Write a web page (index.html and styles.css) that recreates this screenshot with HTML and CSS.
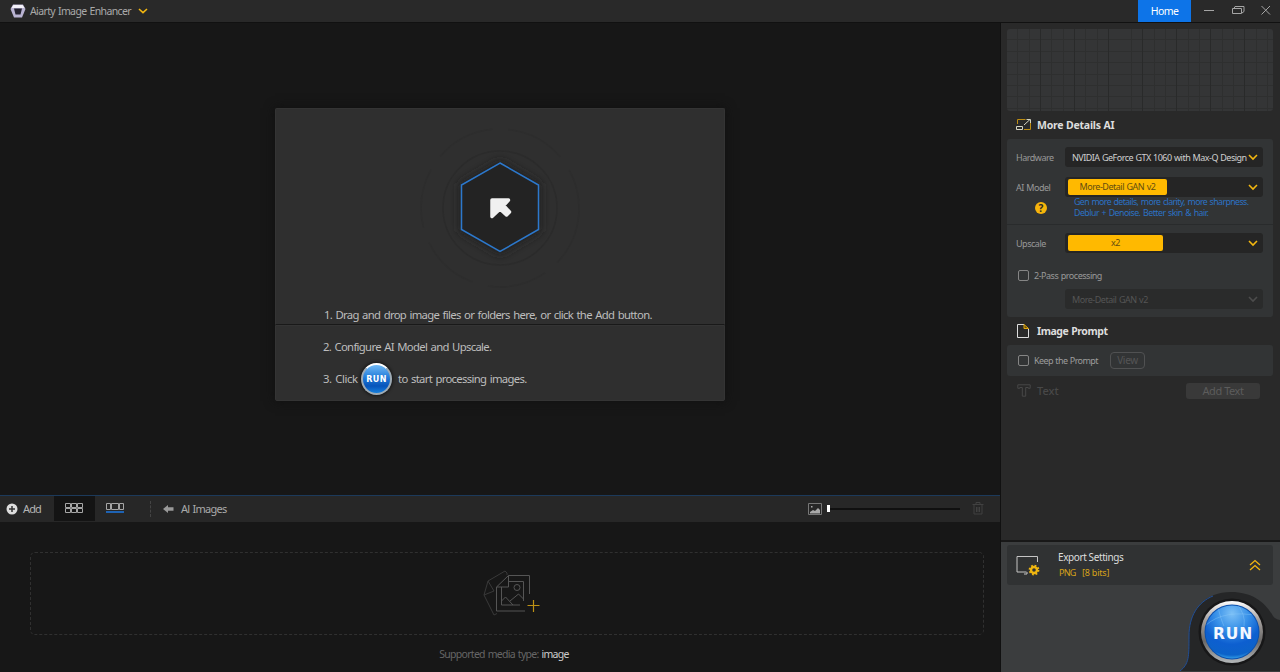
FILE: index.html
```html
<!DOCTYPE html>
<html lang="en">
<head>
    <meta charset="UTF-8">
    <meta name="viewport" content="width=device-width, initial-scale=1.0">
    <title>Aiarty Image Enhancer</title>
    <link rel="stylesheet" href="styles.css">
</head>
<body>
    <header class="titlebar">
        <svg class="logo" width="16" height="14" viewBox="0 0 16 14">
            <path d="M3 .5h10l2.500 4.500-3.500 8.500H4L.5 5z" fill="#b9b3d2"/>
            <path d="M3.500 1h9l2 3h-13z" fill="#f4f2fa"/>
            <path d="M4 4.500h8l-1.500 6h-5z" fill="#252330"/>
        </svg>
        <span class="app-name">Aiarty Image Enhancer</span>
        <svg class="chev" width="10" height="6" viewBox="0 0 10 6"><path d="M1 1l4 3.600L9 1"/></svg>
        <div class="home">Home</div>
        <svg class="win" width="76" height="14" viewBox="0 0 76 14">
            <path d="M0 7.500h10M28.500 5.500h9v5h-9zM30 5.500l1-2h9v5l-2 1.500M57.500 3l8.500 8.500M66 3l-8.500 8.500"/>
        </svg>
    </header>

    <main class="main">
        <section class="workspace">
            <div class="canvas">
                <div class="guide">
                    <div class="guide-top">
                        <svg class="hexagon" width="180" height="170" viewBox="0 0 180 170">
                            <defs>
                                <filter id="glow" x="-30%" y="-30%" width="160%" height="160%"><feGaussianBlur stdDeviation="4"/></filter>
                            </defs>
                            <circle cx="90" cy="85" r="57" class="ring"/>
                            <circle cx="90" cy="85" r="79" class="ring faint"/>
                            <path d="M90 37l41 24v47l-41 24-41-24V61z" fill="#202020" filter="url(#glow)"/>
                            <path d="M90 40l38.500 22v44.500L90 128.500l-38.500-22V62z" fill="#232323" stroke="#2c78cc" stroke-width="1.500"/>
                            <path d="M82 77h16.500l-5 5.500 6 6.500-3 3-6.500-6-8 7.500z" fill="#f0f0f0" stroke="#f0f0f0" stroke-width="3.500" stroke-linejoin="round"/>
                        </svg>
                        <p class="step step-one">1. Drag and drop image files or folders here, or click the Add button.</p>
                    </div>
                    <div class="guide-bottom">
                        <p class="step step-two">2. Configure AI Model and Upscale.</p>
                        <div class="step step-three">
                            <span class="click">3. Click</span>
                            <span class="run-small">RUN</span>
                            <span class="start">to start processing images.</span>
                        </div>
                    </div>
                </div>
            </div>

            <div class="toolbar">
                <div class="add">
                    <svg width="12" height="12" viewBox="0 0 12 12"><circle cx="6" cy="6" r="5.500" fill="#dedede"/><path d="M6 3v6M3 6h6" stroke="#333" stroke-width="1.500"/></svg>
                    <span>Add</span>
                </div>
                <div class="view active">
                    <svg width="18" height="11" viewBox="0 0 18 11"><path d="M.5.500h5v4h-5zM6.500.500h5v4h-5zM12.500.500h5v4h-5zM.5 5.500h5v4h-5zM6.500 5.500h5v4h-5zM12.500 5.500h5v4h-5z" fill="none" stroke="#a6a6a6"/></svg>
                </div>
                <div class="view">
                    <svg width="18" height="11" viewBox="0 0 18 11"><path d="M.5.500h4v6h-4zM5.500.500h7v6h-7zM13.500.500h4v6h-4z" fill="none" stroke="#a6a6a6"/><path d="M0 9h18" stroke="#1e63b4" stroke-width="2"/></svg>
                </div>
                <div class="divider"></div>
                <svg class="back" width="11" height="8" viewBox="0 0 11 8"><path d="M0 4l5-4v2.300h5.500v3.400H5V8z" fill="#999"/></svg>
                <span class="all">Al Images</span>
                <svg class="thumb" width="14" height="12" viewBox="0 0 14 12">
                    <path d="M.5.500h13v11H.5z" fill="none" stroke="#777"/>
                    <path d="M2 10.500V9l3-2 2 1 3-3 2 2v3.500z" fill="#aaa"/><path d="M3 3h1.500v1.500H3z" fill="#aaa"/>
                </svg>
                <div class="slider"><span class="knob"></span></div>
                <svg class="trash" width="12" height="13" viewBox="0 0 12 13"><path d="M.5 2.500h11M4 2V.500h4V2M2 3v9h8V3M4.500 5v5M6 5v5M7.500 5v5" fill="none" stroke="#414141"/></svg>
            </div>

            <div class="tray">
                <div class="dropzone">
                    <svg width="58" height="48" viewBox="0 0 58 48" fill="none">
                        <g stroke="#393939">
                            <path d="M24 3l-2-2L5 11 1 25l10 20 3-1.500M5 11l6 10L1 25M24 3v2"/>
                        </g>
                        <g stroke="#555">
                            <path d="M46.500 24V5.500h-21L13.500 17v24H42M25.500 5.500V17h-12M40.500 31V11.500H25.500M18.500 17v18H37M18.500 31l4-4L30 35M27 31l8.500-7 5 5"/>
                            <circle cx="34" cy="17.500" r="3"/>
                        </g>
                        <path d="M50.500 30v12M44.500 35.500h12" stroke="#bd9114" stroke-width="1.200"/>
                    </svg>
                </div>
                <p class="media">Supported media type: <span class="image">image</span></p>
            </div>
        </section>

        <aside class="sidebar">
            <div class="settings">
                <div class="preview"></div>

                <h2 class="heading">
                    <svg width="16" height="13" viewBox="0 0 16 13" fill="none">
                        <path d="M1.500 6V1.500h8M14.500 5v6.500H8" stroke="#bd8d12"/>
                        <path d="M.5 8.500h6v3h-6zM8 7l6-5.500M10.500 1.500h4V5" stroke="#d5d5c5"/>
                    </svg>
                    <span class="details-title">More Details AI</span>
                </h2>

                <div class="card model-card">
                    <div class="row">
                        <label class="hardware">Hardware</label>
                        <div class="select"><span class="gpu">NVIDIA GeForce GTX 1060 with Max-Q Design</span><svg class="chev" width="10" height="7" viewBox="0 0 10 7"><path d="M1 1l4 4 4-4"/></svg></div>
                    </div>
                    <div class="row ai-row">
                        <label class="ai">AI Model</label>
                        <div class="select"><span class="tag gan">More-Detail GAN v2</span><svg class="chev" width="10" height="7" viewBox="0 0 10 7"><path d="M1 1l4 4 4-4"/></svg></div>
                    </div>
                    <div class="hint">
                        <span class="help">?</span>
                        <p>Gen more details, more clarity, more sharpness.<br><span class="line2">Deblur + Denoise. Better skin &amp; hair.</span></p>
                    </div>
                    <div class="row upscale-row">
                        <label class="upscale">Upscale</label>
                        <div class="select"><span class="tag scale">x2</span><svg class="chev" width="10" height="7" viewBox="0 0 10 7"><path d="M1 1l4 4 4-4"/></svg></div>
                    </div>
                    <div class="check-row"><span class="checkbox"></span><span class="pass">2-Pass processing</span></div>
                    <div class="row pass-row">
                        <div class="select disabled"><span class="gan2">More-Detail GAN v2</span><svg class="chev" width="10" height="7" viewBox="0 0 10 7"><path d="M1 1l4 4 4-4"/></svg></div>
                    </div>
                </div>

                <h2 class="heading prompt-heading">
                    <svg width="16" height="14" viewBox="0 0 16 14" fill="none">
                        <path d="M8 .5H1.500v13h11V5" stroke="#ddd"/>
                        <path d="M8 .5v4h4.500z" fill="#6b520f" stroke="#e0a810"/>
                    </svg>
                    <span class="prompt-title">Image Prompt</span>
                </h2>
                <div class="card prompt-card">
                    <span class="checkbox"></span><span class="keep">Keep the Prompt</span>
                    <span class="view-btn">View</span>
                </div>

                <div class="text-row">
                    <svg width="14" height="13" viewBox="0 0 14 13"><path d="M.8.800h12.400v3.500h-2V3.500H8.700v8.700H5.300V3.500H2.800v.8h-2z" fill="none" stroke="#484848"/></svg>
                    <span class="text-label">Text</span>
                    <span class="add-text">Add Text</span>
                </div>
            </div>

            <div class="export">
                <div class="export-card">
                    <svg class="monitor" width="24" height="21" viewBox="0 0 24 21" fill="none">
                        <path d="M21.500 7V1.500H1v15.500h9.500M8 19h3v-2" stroke="#c5c5c5"/>
                        <circle cx="18" cy="15" r="3" stroke="#efb610" stroke-width="2.400"/>
                        <circle cx="18" cy="15" r="4.500" stroke="#efb610" stroke-width="1.800" stroke-dasharray="1.770 1.770"/>
                    </svg>
                    <div class="export-text">
                        <p class="export-title">Export Settings</p>
                        <p class="format"><span class="png">PNG</span><span>[8 bits]</span></p>
                    </div>
                    <svg class="chev up" width="12" height="12" viewBox="0 0 12 12"><path d="M1 6l5-4.500L11 6M1 11l5-4.500 5 4.500"/></svg>
                </div>
                <div class="run-area">
                    <svg width="104" height="82" viewBox="0 0 104 82">
                        <defs>
                            <linearGradient id="metal" x1="0" y1="0" x2="0" y2="1"><stop offset="0" stop-color="#fff"/><stop offset=".3" stop-color="#a7a2a0"/><stop offset=".65" stop-color="#6b6968"/><stop offset="1" stop-color="#b4b8ba"/></linearGradient>
                            <radialGradient id="blue" cx=".5" cy=".15" r=".9"><stop offset="0" stop-color="#7cc0f6"/><stop offset=".35" stop-color="#3790e8"/><stop offset=".65" stop-color="#0d5fd0"/><stop offset=".87" stop-color="#0c62c9"/><stop offset="1" stop-color="#4cc4fa"/></radialGradient>
                            <clipPath id="ball"><circle cx="56" cy="43" r="26.500"/></clipPath>
                        </defs>
                        <path d="M4 82C13 75 13 68 13 47C13 20 30 3 55 3C76 3 89 13 97 27Q99 30 104 31V82z" fill="#252627"/>
                        <path d="M4 82C13 75 13 68 13 47C13 27 22 13 37 7" fill="none" stroke="#204e96"/>
                        <circle cx="56" cy="43" r="33.500" fill="#171718"/>
                        <circle cx="56" cy="43" r="31" fill="url(#metal)"/>
                        <circle cx="56" cy="43" r="27.500" fill="#0b4fac"/>
                        <circle cx="56" cy="43" r="26.500" fill="url(#blue)"/>
                        <g clip-path="url(#ball)" fill="none" stroke="#8ccafa" stroke-opacity=".4"><path d="M30 36Q48 20 84 27M42 18Q45 31 48 37M60 14Q70 25 68 37"/></g>
                        <text x="57" y="49.500" class="run-text">RUN</text>
                    </svg>
                </div>
            </div>
        </aside>
    </main>
</body>
</html>
```

FILE: styles.css
```css
* {
    box-sizing: border-box;
}
body {
    display: flex;
    flex-direction: column;
    height: 100vh;
    margin: 0;
    overflow: hidden;
    background-color: #171717;
    color: #b8b8b8;
    font-family: "Noto Sans", "DejaVu Sans", sans-serif;
    font-size: 11px;
    white-space: nowrap;
}
p, h2 {
    margin: 0;
}
svg {
    display: block;
    flex: none;
}
.titlebar {
    display: flex;
    align-items: center;
    height: 23px;
    padding-left: 10px;
    background-color: #292929;
    border-bottom: 1px solid #111;
}
.app-name {
    width: 101px;
    margin: 0 7px 0 4px;
    color: #a9a9a9;
    font-size: 10.5px;
    letter-spacing: -0.62px;
    word-spacing: 0.8px;
}
.chev {
    fill: none;
    stroke: #f3b710;
    stroke-width: 1.6;
}
.home {
    width: 53px;
    height: 22px;
    margin-left: auto;
    background-color: #0d74e8;
    color: #fff;
    font-size: 10.5px;
    line-height: 22px;
    text-align: center;
    letter-spacing: -0.6px;
}
.win {
    margin: 0 0 3px 13px;
    fill: none;
    stroke: #a5a5a5;
}
.main {
    display: flex;
    flex: 1;
}
.workspace {
    display: flex;
    flex-direction: column;
    width: 1000px;
}
.canvas {
    height: 472px;
    padding: 85px 275px 0;
}
.guide {
    box-shadow: 0 0 10px #101010;
}
.guide-top {
    display: flex;
    flex-direction: column;
    align-items: center;
    height: 217px;
    padding-top: 14px;
    background-color: #2f2f2f;
    border: 1px solid #343434;
    border-bottom: 1px solid #191919;
    border-radius: 2px 2px 0 0;
}
.ring {
    fill: none;
    stroke: #2b2b2b;
    stroke-width: 1.5;
}
.faint {
    stroke: #2d2d2d;
    stroke-dasharray: 60 16;
}
.guide-bottom {
    height: 76px;
    background-color: #2f2f2f;
    border: 1px solid #343434;
    border-radius: 0 0 2px 2px;
    padding: 12px 0 0 47px;
}
.step {
    color: #bdbdbd;
    font-size: 11.3px;
    line-height: 18px;
    letter-spacing: -0.68px;
    word-spacing: 1.1px;
}
.step-one {
    width: 326px;
    margin: 13px 0 0 -26px;
}
.step-three {
    display: flex;
    align-items: center;
    height: 34px;
    margin-top: 6px;
}
.click {
    width: 38px;
    letter-spacing: -0.4px;
}
.run-small {
    width: 31px;
    height: 32px;
    margin-right: 6px;
    border: 2px solid #9eabb5;
    border-top-color: #fff;
    border-radius: 50%;
    background: linear-gradient(#70b9f5, #217bd9 45%, #0754ba 75%, #1680dd);
    box-shadow: 0 0 3px 1px #151515;
    color: #fff;
    font: bold 8px/29px "DejaVu Sans", sans-serif;
    text-align: center;
    letter-spacing: 0.4px;
}
.toolbar {
    display: flex;
    align-items: center;
    height: 27px;
    padding-bottom: 1px;
    background-color: #272727;
    border-top: 1px solid #1c3a5b;
    color: #b5b5b5;
}
.add {
    display: flex;
    align-items: center;
    gap: 5px;
    width: 54px;
    padding-left: 6px;
    letter-spacing: -0.9px;
}
.view {
    display: flex;
    align-items: center;
    justify-content: center;
    width: 40px;
    height: 25px;
    padding-right: 1px;
}
.active {
    width: 41px;
    background-color: #141414;
}
.divider {
    width: 28px;
    height: 16px;
    margin-left: 15px;
    margin-right: -15px;
    border-left: 1px dashed #444;
}
.all {
    width: 54px;
    margin-left: 7px;
    color: #aaa;
    letter-spacing: -0.75px;
    word-spacing: 1px;
}
.thumb {
    margin-left: auto;
}
.slider {
    display: flex;
    align-items: center;
    width: 133px;
    height: 2px;
    margin: 0 12px 0 5px;
    background-color: #101010;
}
.knob {
    width: 3px;
    height: 7px;
    background-color: #fff;
}
.trash {
    margin-right: 16px;
}
.tray {
    flex: 1;
    padding: 30px 16px 0 30px;
}
.dropzone {
    display: flex;
    justify-content: center;
    height: 83px;
    padding: 17px 0 0 9px;
    border: 1px dashed #303030;
    border-radius: 5px;
}
.media {
    margin-top: 12px;
    padding-right: 6px;
    color: #666;
    font-size: 10.5px;
    text-align: center;
    letter-spacing: -0.72px;
    word-spacing: 0.9px;
}
.image {
    color: #ccc;
}
.sidebar {
    display: flex;
    flex-direction: column;
    width: 280px;
    background-color: #292929;
    border-left: 1px solid #111;
}
.settings {
    height: 519px;
    padding: 6px 7px 0 6px;
    border-bottom: 2px solid #181818;
}
.preview {
    height: 82px;
    border-radius: 3px;
    background-color: #343536;
    background-image:
        repeating-linear-gradient(90deg, transparent 0 33px, #292a2a 33px 34px),
        repeating-linear-gradient(90deg, transparent 0 10.35px, #2e2f2f 10.35px 11.35px),
        repeating-linear-gradient(transparent 0 10.4px, #2e2f2f 10.4px 11.4px);
}
.heading {
    display: flex;
    align-items: center;
    gap: 5px;
    height: 28px;
    padding: 0 0 1px 9px;
    color: #ddd;
    font-size: 10.5px;
    letter-spacing: -0.25px;
    word-spacing: 0.4px;
}
.prompt-heading {
    padding-bottom: 0;
    letter-spacing: -0.42px;
}
.card {
    background-color: #323435;
    border-radius: 3px;
}
.model-card {
    height: 178px;
    padding: 8px 10px 0 9px;
    color: #999;
    font-size: 9px;
    letter-spacing: -0.48px;
    word-spacing: 0.6px;
}
.row {
    display: flex;
    align-items: center;
    justify-content: space-between;
    height: 20px;
}
.ai-row {
    margin-top: 10px;
}
.select {
    display: flex;
    align-items: center;
    justify-content: space-between;
    width: 198px;
    height: 20px;
    padding: 0 5px 0 3px;
    background-color: #252525;
    border-radius: 3px;
}
.gpu {
    margin-left: 4px;
    color: #d0d0d0;
    letter-spacing: -0.52px;
}
.tag {
    width: 99px;
    height: 16px;
    border-radius: 2px;
    background-color: #ffb900;
    color: #644d10;
    line-height: 16px;
    text-align: center;
}
.scale {
    width: 95px;
}
.hint {
    display: flex;
    height: 28px;
    margin: 0 -10px 0 -9px;
    padding-left: 28px;
    border-bottom: 1px solid #292b2c;
    color: #2c72c4;
    font-size: 8.8px;
    line-height: 11px;
    letter-spacing: -0.6px;
    word-spacing: 0.8px;
}
.line2 {
    letter-spacing: -0.52px;
}
.help {
    flex: none;
    width: 12px;
    height: 12px;
    margin: 5px 27px 0 0;
    border-radius: 50%;
    background-color: #f6b40b;
    color: #292929;
    font-size: 10px;
    font-weight: bold;
    line-height: 12px;
    text-align: center;
    letter-spacing: 0;
}
.upscale-row {
    margin-top: 8px;
}
.check-row {
    display: flex;
    align-items: center;
    gap: 5px;
    height: 26px;
    margin-top: 9px;
    margin-bottom: 1px;
}
.checkbox {
    width: 11px;
    height: 11px;
    margin-left: 2px;
    border: 1px solid #858585;
    border-radius: 2px;
}
.pass-row {
    justify-content: flex-end;
}
.disabled {
    background-color: #2a2b2b;
    color: #555;
}
.disabled .chev {
    stroke: #4c4c4c;
}
.gan2 {
    margin-left: 4px;
}
.prompt-card {
    display: flex;
    align-items: center;
    height: 31px;
    padding-left: 9px;
    color: #9c9c9c;
    font-size: 9px;
}
.keep {
    width: 71px;
    margin-left: 5px;
    letter-spacing: -0.6px;
    word-spacing: 0.7px;
}
.view-btn {
    width: 35px;
    height: 17px;
    margin-left: 5px;
    border: 1px solid #505152;
    border-radius: 4px;
    color: #555;
    font-size: 10px;
    line-height: 15px;
    text-align: center;
    letter-spacing: -0.3px;
}
.text-row {
    display: flex;
    align-items: center;
    height: 29px;
    padding: 0 13px 0 10px;
    color: #484848;
}
.text-label {
    margin-left: 6px;
    font-weight: 500;
}
.add-text {
    width: 74px;
    height: 16px;
    margin-left: auto;
    border-radius: 3px;
    background-color: #393939;
    color: #5c5c5c;
    line-height: 16px;
    text-align: center;
    letter-spacing: -0.45px;
}
.export {
    display: flex;
    flex: 1;
    flex-direction: column;
    padding-top: 3px;
    background-color: #3b3d3e;
}
.export-card {
    display: flex;
    align-items: center;
    height: 40px;
    margin: 0 7px 0 6px;
    padding: 0 12px 0 9px;
    border-radius: 3px;
    background-color: #303233;
}
.export-text {
    margin: 0 0 0 18px;
    font-size: 10px;
    line-height: 15px;
}
.export-title {
    color: #ddd;
    letter-spacing: -0.4px;
}
.format {
    display: flex;
    padding-left: 1px;
    color: #d7a318;
    font-size: 9px;
    line-height: 16px;
    letter-spacing: -0.2px;
}
.png {
    width: 23px;
    letter-spacing: -0.8px;
}
.up {
    margin-left: auto;
    stroke-width: 1.3;
}
.run-area {
    display: flex;
    justify-content: flex-end;
    margin-top: 4px;
}
.run-text {
    fill: #f4f8ff;
    font: bold 15.5px "DejaVu Sans", sans-serif;
    letter-spacing: 0.9px;
    text-anchor: middle;
}
```
